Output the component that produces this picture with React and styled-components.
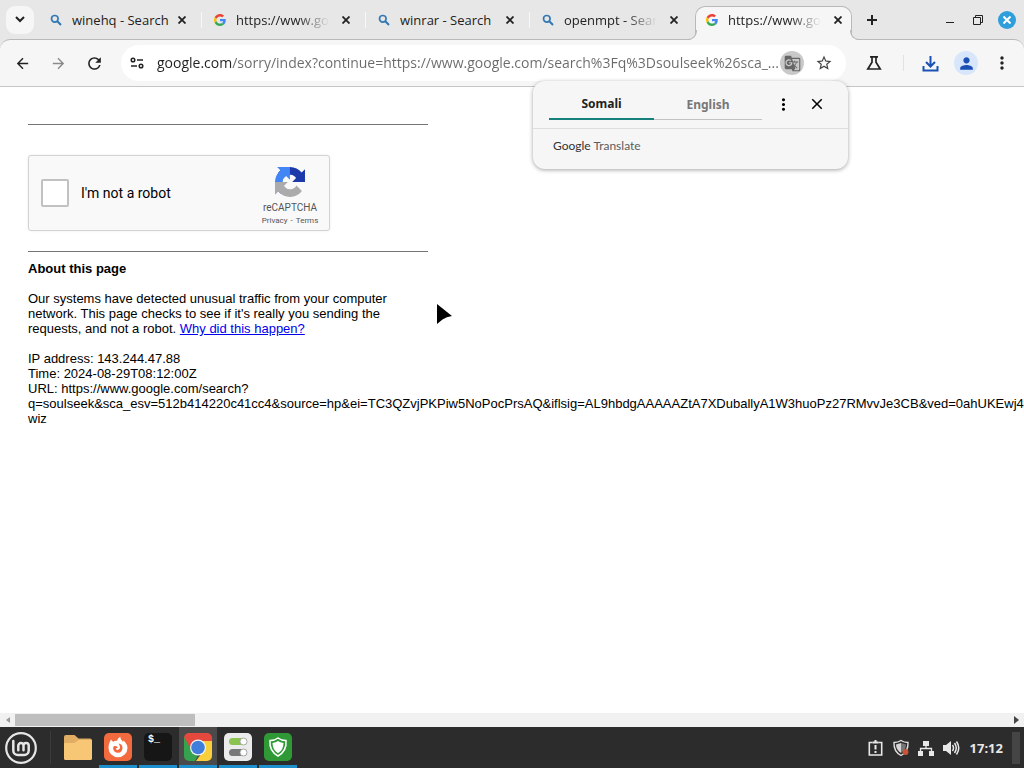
import React from "react";
import styled, { createGlobalStyle } from "styled-components";
import { MdArrowBack, MdArrowForward, MdClose, MdGTranslate, MdMoreVert, MdRefresh, MdStarBorder, MdPerson } from "react-icons/md";

const GlobalStyle = createGlobalStyle`
  * { box-sizing: border-box; }
  body { margin: 0; background: #fff; font-family: "Liberation Sans", sans-serif; overflow: hidden; }
  button { border: 0; padding: 0; margin: 0; background: none; color: inherit; font: inherit; display: inline-flex; align-items: center; justify-content: center; flex: none; }
  svg { display: block; flex: none; }
`;

const Screen = styled.div`
  display: flex;
  flex-direction: column;
  min-height: 100vh;
  width: 100%;
  overflow: hidden;
`;

/* ---- browser chrome ---- */
const TabStrip = styled.header`
  display: flex;
  align-items: center;
  height: 39px;
  padding: 0 8px 0 6px;
  background: #e7e7e7;
  color: #222;
  font: 13px/18px "Open Sans", sans-serif;
`;

const TabSearch = styled.button`
  width: 28px;
  height: 28px;
  border-radius: 9px;
  background: #f6f6f6 !important;
  margin-right: 4px;
`;

const Tabs = styled.nav`
  display: flex;
  align-self: stretch;
`;

const Tab = styled.div`
  position: relative;
  display: flex;
  align-items: center;
  width: 164px;
  padding: 0 13px 0 12px;
  gap: 10px;
  z-index: ${(p) => (p.$active ? 2 : 1)};
  &::after {
    content: "";
    position: absolute;
    right: 0;
    top: 12px;
    height: 16px;
    width: 1px;
    background: ${(p) => (p.$line ? "#f8f8f8" : "transparent")};
  }
`;

const ActiveShape = styled.span`
  position: absolute;
  inset: 6px 6px -1px 1px;
  background: #f6f6f6;
  border: 1px solid #b9b9b9;
  border-bottom: 0;
  border-radius: 10px 10px 0 0;
  z-index: -1;
  &::before, &::after {
    content: "";
    position: absolute;
    bottom: 0;
    width: 9px;
    height: 9px;
    border-bottom: 1px solid #b9b9b9;
  }
  &::before {
    left: -9px;
    border-right: 1px solid #b9b9b9;
    border-bottom-right-radius: 9px;
    box-shadow: 3px 3px 0 #f6f6f6;
  }
  &::after {
    right: -9px;
    border-left: 1px solid #b9b9b9;
    border-bottom-left-radius: 9px;
    box-shadow: -3px 3px 0 #f6f6f6;
  }
`;

const TabTitle = styled.a`
  flex: 1;
  min-width: 0;
  margin-right: -6px;
  overflow: hidden;
  white-space: nowrap;
  color: #222;
  text-decoration: none;
  mask-image: ${(p) => (p.$fade ? "linear-gradient(90deg, #000 62%, transparent 94%)" : "none")};
`;

const TabClose = styled.button`
  width: 14px;
  height: 14px;
`;

const WindowButtons = styled.div`
  display: flex;
  align-items: center;
  gap: 12px;
  margin-left: auto;
`;

const WindowButton = styled.button`
  width: 16px;
  height: 18px;
`;

const NewTab = styled.button`
  width: 28px;
  height: 28px;
`;

const CloseWindow = styled.button`
  width: 18px;
  height: 18px;
  border-radius: 50%;
  background: #2f9fdc !important;
  color: #fff;
`;

const ToolbarBack = styled.div`
  background: #e7e7e7;
`;

const Toolbar = styled.div`
  display: flex;
  align-items: center;
  height: 48px;
  padding: 0 10px;
  background: #f6f6f6;
  border-top: 1px solid #b9b9b9;
  border-bottom: 1px solid #c6c6c6;
  border-radius: 10px 10px 0 0;
  color: #222;
`;

const ToolButton = styled.button`
  width: 24px;
  height: 24px;
  border-radius: 50%;
  margin-right: ${(p) => p.$gap || 0}px;
  color: ${(p) => p.$color || "#222"};
  && { background: ${(p) => p.$bg || "none"}; }
`;

const Omnibox = styled.form`
  display: flex;
  align-items: center;
  flex: 1;
  min-width: 0;
  height: 36px;
  border-radius: 18px;
  background: #fff;
  padding: 0 10px 0 4px;
  margin: 0 16px 0 15px;
`;

const Address = styled.input`
  flex: 1;
  min-width: 0;
  border: 0;
  outline: 0;
  padding: 0;
  margin: 0 0 0 8px;
  font: 14px/20px "Open Sans", sans-serif;
  color: transparent;
  background: linear-gradient(90deg, #222 75px, #6a6a6a 75px);
  background-clip: text;
  -webkit-background-clip: text;
`;

const ToolDivider = styled.span`
  width: 1px;
  height: 16px;
  background: #e2e2e2;
  margin: 0 14px 0 17px;
`;

/* ---- page ---- */
const Viewport = styled.main`
  position: relative;
  flex: 1;
  padding: 37px 28px 0;
  overflow: hidden;
  background: #fff;
`;

const Column = styled.div`
  width: 400px;
  max-width: 100%;
  color: #000;
  font-size: 13px;
  line-height: 15px;
`;

const Rule = styled.hr`
  height: 1px;
  border: 0;
  margin: 0;
  background: #757575;
`;

const Captcha = styled.section`
  display: flex;
  align-items: center;
  width: 302px;
  height: 76px;
  margin: 30px 0 20px;
  padding: 0 7px 0 12px;
  background: #f9f9f9;
  border: 1px solid #d3d3d3;
  border-radius: 3px;
  box-shadow: 0 0 3px rgba(0, 0, 0, 0.08);
  font-family: Roboto, sans-serif;
`;

const CheckLabel = styled.label`
  display: flex;
  align-items: center;
  gap: 12px;
  flex: 1;
  font-size: 14px;
  line-height: 18px;
`;

const Check = styled.input`
  appearance: none;
  width: 28px;
  height: 28px;
  margin: 0;
  background: #fff;
  border: 2px solid #c1c1c1;
  border-radius: 2px;
`;

const Brand = styled.div`
  display: flex;
  flex-direction: column;
  align-items: center;
  gap: 2px;
  width: 64px;
  margin-top: 6px;
  color: #555;
  font-size: 10px;
  line-height: 12px;
`;

const BrandName = styled.span`
  margin-top: 3px;
`;

const BrandLinks = styled.div`
  display: flex;
  gap: 3px;
  font-size: 8px;
  line-height: 10px;
  white-space: nowrap;
  a { color: #555; text-decoration: none; }
`;

const Heading = styled.h1`
  margin: 9px 0 15px;
  font-size: 13px;
  line-height: 15px;
`;

const Paragraph = styled.p`
  margin: 0 0 15px;
  white-space: ${(p) => (p.$nowrap ? "nowrap" : "normal")};
  a { color: #0000ee; }
`;

const Translate = styled.aside`
  position: absolute;
  top: 81px;
  right: 176px;
  width: 315px;
  height: 88px;
  background: #f6f6f6;
  border-radius: 12px;
  box-shadow: 0 1px 4px rgba(0, 0, 0, 0.36);
  z-index: 5;
  font-family: "Noto Sans", sans-serif;
`;

const TranslateTop = styled.div`
  display: flex;
  height: 48px;
  padding: 8px 20px 8px 16px;
  border-bottom: 1px solid #dedede;
`;

const LanguageTab = styled.button`
  width: ${(p) => (p.$on ? 105 : 108)}px;
  height: 31px;
  font-size: 12px;
  font-weight: 700;
  color: ${(p) => (p.$on ? "#222" : "#777")};
  && { border-bottom: ${(p) => (p.$on ? "2px solid #16817a" : "1px solid #c3c3c3")}; }
`;

const PopupButton = styled.button`
  width: 33px;
  height: 30px;
  margin-left: ${(p) => p.$gap || 0}px;
`;

const TranslateBrand = styled.div`
  padding: 8px 20px;
  font: 12px/18px Lato, sans-serif;
  color: #5c5c5c;
  b { font-weight: 400; color: #333; }
`;

const Pointer = styled.svg`
  position: absolute;
  left: 435px;
  top: 302px;
  z-index: 6;
`;

const ScrollBar = styled.div`
  display: flex;
  align-items: center;
  height: 14px;
  background: #f1f1f1;
`;

const ScrollArrow = styled.button`
  width: 15px;
  height: 14px;
  margin-left: ${(p) => (p.$end ? "auto" : 0)};
  color: ${(p) => (p.$end ? "#444" : "#999")};
`;

const Thumb = styled.div`
  width: 18%;
  max-width: 180px;
  height: 12px;
  background: #bebebe;
`;

/* ---- desktop panel ---- */
const Panel = styled.footer`
  display: flex;
  align-items: center;
  height: 41px;
  padding: 0 4px;
  background: #2c2c2c;
  color: #e8e8e8;
`;

const MenuButton = styled.button`
  width: 34px;
  height: 40px;
`;

const PanelDivider = styled.span`
  width: 1px;
  height: 33px;
  background: #3b3b3b;
  margin: 0 8px 0 12px;
`;

const Launchers = styled.nav`
  display: flex;
  gap: 2px;
  align-self: stretch;
`;

const Launcher = styled.button`
  width: 38px;
  height: 41px;
  && { background: ${(p) => (p.$active ? "#4a4a4a" : "none")}; }
  && { border-bottom: 3px solid ${(p) => (p.$running ? "#1e8fcd" : "transparent")}; }
`;

const Tile = styled.span`
  display: flex;
  align-items: center;
  justify-content: center;
  width: 28px;
  height: 28px;
  border-radius: 5px;
  margin-top: 1px;
  background: ${(p) => p.$bg};
  color: #fff;
`;

const Prompt = styled.span`
  align-self: flex-start;
  width: 100%;
  padding: 1px 4px;
  text-align: left;
  font: 700 10px/12px "Liberation Mono", monospace;
`;

const Tray = styled.div`
  display: flex;
  align-items: center;
  gap: 8px;
  margin-left: auto;
`;

const Clock = styled.time`
  margin: 0 1px 0 2px;
  font: 700 13px/18px "Noto Sans", sans-serif;
`;

const ShowDesktop = styled.button`
  width: 8px;
  height: 32px;
  && { background: #454545; }
`;

const SearchIcon = () => (
  <svg width="12" height="12" viewBox="0 0 12 12" fill="none" stroke="#3178b4">
    <circle cx="4.8" cy="4.8" r="3.3" strokeWidth="1.7" />
    <path d="M7.3 7.3 11 11" strokeWidth="2" />
  </svg>
);

const GoogleIcon = () => (
  <svg width="12" height="12" viewBox="0 0 48 48">
    <path fill="#EA4335" d="M24 9.5c3.54 0 6.71 1.22 9.21 3.6l6.85-6.85C35.9 2.38 30.47 0 24 0 14.62 0 6.51 5.38 2.56 13.22l7.98 6.19C12.43 13.72 17.74 9.5 24 9.5z" />
    <path fill="#4285F4" d="M46.98 24.55c0-1.57-.15-3.09-.38-4.55H24v9.02h12.94c-.58 2.96-2.26 5.48-4.78 7.18l7.73 6c4.51-4.18 7.09-10.36 7.09-17.65z" />
    <path fill="#FBBC05" d="M10.53 28.59A14.5 14.5 0 0 1 9.77 24c0-1.6.27-3.14.76-4.59l-7.98-6.19A23.9 23.9 0 0 0 0 24c0 3.88.92 7.54 2.56 10.78l7.97-6.19z" />
    <path fill="#34A853" d="M24 48c6.48 0 11.93-2.13 15.89-5.81l-7.73-6c-2.15 1.45-4.92 2.3-8.16 2.3-6.26 0-11.57-4.22-13.47-9.91l-7.98 6.19C6.51 42.62 14.62 48 24 48z" />
  </svg>
);

const Cross = ({ size = 8, width = 1.8 }) => (
  <svg width={size} height={size} viewBox="0 0 8 8" stroke="currentColor" strokeWidth={width}>
    <path d="M.5.5l7 7M7.5.5l-7 7" />
  </svg>
);

const tabs = [
  { title: "winehq - Search", icon: <SearchIcon />, line: true },
  { title: "https://www.google.com", icon: <GoogleIcon />, fade: true, line: true },
  { title: "winrar - Search", icon: <SearchIcon />, line: true },
  { title: "openmpt - Search", icon: <SearchIcon />, fade: true },
  { title: "https://www.google.com", icon: <GoogleIcon />, fade: true, active: true },
];

const Recaptcha = () => (
  <svg width="30" height="30" viewBox="0 0 64 64">
    <path fill="#1c3aa9" d="M64 31.955l-.033-1.37V4.687l-7.16 7.16C50.948 4.674 42.033.093 32.05.093c-10.4 0-19.622 4.96-25.458 12.64l11.736 11.86a15.55 15.55 0 0 1 4.754-5.334c2.05-1.6 4.952-2.906 8.968-2.906.485 0 .86.057 1.135.163 4.976.393 9.288 3.14 11.828 7.124l-8.307 8.307L64 31.953" />
    <path fill="#4285f4" d="M31.862.094l-1.37.033H4.594l7.16 7.16C4.58 13.147 0 22.06 0 32.046c0 10.4 4.96 19.622 12.64 25.458L24.5 45.768a15.55 15.55 0 0 1-5.334-4.754c-1.6-2.05-2.906-4.952-2.906-8.968 0-.485.057-.86.163-1.135.393-4.976 3.14-9.288 7.124-11.828l8.307 8.307L31.86.095" />
    <path fill="#ababab" d="M.001 32.045l.033 1.37v25.898l7.16-7.16c5.86 7.173 14.774 11.754 24.76 11.754 10.4 0 19.622-4.96 25.458-12.64l-11.736-11.86a15.55 15.55 0 0 1-4.754 5.334c-2.05 1.6-4.952 2.906-8.968 2.906-.485 0-.86-.057-1.135-.163-4.976-.393-9.288-3.14-11.828-7.124l8.307-8.307c-10.522.04-22.4.066-27.295-.005" />
  </svg>
);

const MintIcon = () => (
  <svg width="34" height="34" viewBox="0 0 34 34" fill="none" stroke="#e6e6e6">
    <circle cx="17" cy="17" r="14.8" strokeWidth="2.2" />
    <path strokeWidth="2.5" strokeLinecap="round" d="M9.3 10v9.5a4.5 4.5 0 0 0 4.5 4.5h6.4a4.5 4.500 0 0 0 4.500-4.500V14.600a2.600 2.600 0 0 0-5.200 0V19.300M19.500 14.600a2.600 2.600 0 0 0-5.200 0V19.300" />
  </svg>
);

const FolderIcon = () => (
  <svg width="28" height="28" viewBox="0 0 28 28">
    <path fill="#e0ad63" d="M0 4Q0 2 2 2h8.500l4 3.500H26q2 0 2 2V12H0z" />
    <path fill="#f8c775" d="M0 11q0-1 1-1h9.500l4-3H27q1 0 1 1v17.500q0 1.500-1.500 1.500h-25Q0 27 0 25.500z" />
  </svg>
);

const FirefoxIcon = () => (
  <svg width="22" height="22" viewBox="0 0 22 22">
    <path fill="#fff" d="M2.500 6.500L4 3.500l2 2.300Q8 4.500 10 4.800q1-2.800 3.300-4Q13.200 3 15 4.500l1 1.500.5-1.500Q20.500 8 20.500 12a9.500 9.200 0 0 1-19 0q0-3 1-5.500z" />
    <path fill="#f26a3d" d="M11.500 7.500q3.800.6 4 4.200a4.700 4.700 0 0 1-9.400.8q0-1.500.8-2.500l2.800.2 1.200 1-2.200 1.500q1 1.600 2.600 1.100 2-.6 1.700-2.800-.2-2-1.500-3.500z" />
  </svg>
);

const ChromeIcon = () => (
  <svg width="28" height="28" viewBox="0 0 28 28">
    <defs><clipPath id="tile"><rect width="28" height="28" rx="5" /></clipPath></defs>
    <g clipPath="url(#tile)">
      <path fill="#e5483c" d="M0 0h28v8H14L7 17 0 5z" />
      <path fill="#f9cf3c" d="M28 8v20H12l8-11-3-9z" />
      <path fill="#35a24e" d="M0 4l8 14 6 4-3 6H0z" />
    </g>
    <circle cx="14" cy="14.500" r="8" fill="#f3f3f3" />
    <circle cx="14" cy="14.500" r="6.800" fill="#3f7edb" />
  </svg>
);

const SettingsIcon = () => (
  <svg width="28" height="28" viewBox="0 0 28 28">
    <rect x="5" y="5" width="18" height="7" rx="3.500" fill="#8bc34f" />
    <circle cx="19.500" cy="8.500" r="3.500" fill="#fff" stroke="#999" strokeWidth=".8" />
    <rect x="5" y="16" width="18" height="7" rx="3.500" fill="#777" />
    <circle cx="19.500" cy="19.500" r="3.500" fill="#fff" stroke="#999" strokeWidth=".8" />
  </svg>
);

const ShieldIcon = () => (
  <svg width="22" height="22" viewBox="0 0 22 22">
    <path fill="none" stroke="#fff" strokeWidth="1.500" d="M11 2q3 2.500 8 2.500 1 10.500-8 15.500-9-5-8-15.500 5 0 8-2.500z" />
    <path fill="#fff" d="M11 5q2 1.600 5.500 1.900Q16.500 14 11 17.200 5.500 14 5.500 6.900 9 6.600 11 5z" />
  </svg>
);

export default function App() {
  return (
    <Screen>
      <GlobalStyle />
      <TabStrip>
        <TabSearch aria-label="Search tabs">
          <svg width="10" height="7" viewBox="0 0 10 7" fill="none" stroke="currentColor" strokeWidth="2"><path d="M1 1l4 4 4-4" /></svg>
        </TabSearch>
        <Tabs>
          {tabs.map((t, i) => (
            <Tab key={i} $active={t.active} $line={t.line}>
              {t.active && <ActiveShape />}
              {t.icon}
              <TabTitle href="#" $fade={t.fade}>{t.title}</TabTitle>
              <TabClose aria-label="Close tab"><Cross /></TabClose>
            </Tab>
          ))}
        </Tabs>
        <NewTab aria-label="New tab">
          <svg width="10" height="10" viewBox="0 0 10 10" stroke="currentColor" strokeWidth="2"><path d="M5 0v10M0 5h10" /></svg>
        </NewTab>
        <WindowButtons>
          <WindowButton aria-label="Minimize">
            <svg width="8" height="8" viewBox="0 0 8 8"><path stroke="currentColor" d="M0 6.500h8" /></svg>
          </WindowButton>
          <WindowButton aria-label="Restore">
            <svg width="10" height="10" viewBox="0 0 10 10" fill="none" stroke="currentColor"><path d="M.5 2.500h7v7h-7zM2.500 2.500v-2h7v7h-2" /></svg>
          </WindowButton>
          <CloseWindow aria-label="Close window"><Cross width={2} /></CloseWindow>
        </WindowButtons>
      </TabStrip>

      <ToolbarBack>
        <Toolbar>
          <ToolButton aria-label="Back" $gap={12}><MdArrowBack size={17} /></ToolButton>
          <ToolButton aria-label="Forward" $gap={12} $color="#8a8a8a"><MdArrowForward size={17} /></ToolButton>
          <ToolButton aria-label="Reload"><MdRefresh size={19} /></ToolButton>
          <Omnibox onSubmit={(e) => e.preventDefault()}>
            <ToolButton type="button" aria-label="Site information">
              <svg width="14" height="12" viewBox="0 0 14 12" fill="none" stroke="currentColor" strokeWidth="1.500">
                <circle cx="3" cy="3" r="1.800" /><path d="M7 3h6" />
                <circle cx="11" cy="9" r="1.800" /><path d="M1 9h6" />
              </svg>
            </ToolButton>
            <Address aria-label="Address" type="text" readOnly value="google.com/sorry/index?continue=https://www.google.com/search%3Fq%3Dsoulseek%26sca_..." />
            <ToolButton type="button" aria-label="Translate page" $bg="#c9c9c9" $gap={8} $color="#666"><MdGTranslate size={17} /></ToolButton>
            <ToolButton type="button" aria-label="Bookmark" $color="#444"><MdStarBorder size={18} /></ToolButton>
          </Omnibox>
          <ToolButton aria-label="Experiments">
            <svg width="16" height="16" viewBox="0 0 16 16" fill="none" stroke="currentColor" strokeWidth="1.700"><path d="M4 1.800h8M6 2v5.200L1.800 14h12.400L10 7.200V2" /></svg>
          </ToolButton>
          <ToolDivider />
          <ToolButton aria-label="Downloads" $gap={12} $color="#1b50b4">
            <svg width="17" height="17" viewBox="0 0 17 17" fill="none" stroke="currentColor" strokeWidth="2"><path d="M8.500 1v10M4 7l4.500 4.500L13 7M1.500 11v4.500h14V11" /></svg>
          </ToolButton>
          <ToolButton aria-label="Profile" $bg="#d8e6fb" $gap={12} $color="#1b50b4"><MdPerson size={19} /></ToolButton>
          <ToolButton aria-label="Menu"><MdMoreVert size={20} /></ToolButton>
        </Toolbar>
      </ToolbarBack>

      <Viewport>
        <Column>
          <Rule />
          <Captcha>
            <CheckLabel><Check type="checkbox" />I'm not a robot</CheckLabel>
            <Brand>
              <Recaptcha />
              <BrandName>reCAPTCHA</BrandName>
              <BrandLinks><a href="#">Privacy</a><span>-</span><a href="#">Terms</a></BrandLinks>
            </Brand>
          </Captcha>
          <Rule />
          <Heading>About this page</Heading>
          <Paragraph>
            Our systems have detected unusual traffic from your computer network. This page checks to see if it's really you sending the requests, and not a robot. <a href="#">Why did this happen?</a>
          </Paragraph>
          <Paragraph $nowrap>
            IP address: 143.244.47.88<br />
            Time: 2024-08-29T08:12:00Z<br />
            URL: https://www.google.com/search?<br />
            q=soulseek&amp;sca_esv=512b414220c41cc4&amp;source=hp&amp;ei=TC3QZvjPKPiw5NoPocPrsAQ&amp;iflsig=AL9hbdgAAAAAZtA7XDuballyA1W3huoPz27RMvvJe3CB&amp;ved=0ahUKEwj4<br />
            wiz
          </Paragraph>
        </Column>
      </Viewport>

      <Translate>
        <TranslateTop>
          <LanguageTab $on>Somali</LanguageTab>
          <LanguageTab>English</LanguageTab>
          <PopupButton aria-label="Translate options" $gap={5}><MdMoreVert size={19} /></PopupButton>
          <PopupButton aria-label="Close"><MdClose size={18} /></PopupButton>
        </TranslateTop>
        <TranslateBrand><b>Google</b> Translate</TranslateBrand>
      </Translate>
      <Pointer width="20" height="26" viewBox="0 0 20 26"><path d="M2 2v20l5.500-4.500q4-3 9.500-3.500z" fill="#000" /></Pointer>

      <ScrollBar>
        <ScrollArrow aria-label="Scroll left"><svg width="4" height="6" viewBox="0 0 4 6"><path fill="currentColor" d="M4 0v6L0 3z" /></svg></ScrollArrow>
        <Thumb />
        <ScrollArrow aria-label="Scroll right" $end><svg width="5" height="8" viewBox="0 0 5 8"><path fill="currentColor" d="M0 0l5 4-5 4z" /></svg></ScrollArrow>
      </ScrollBar>

      <Panel>
        <MenuButton aria-label="Menu"><MintIcon /></MenuButton>
        <PanelDivider />
        <Launchers>
          <Launcher aria-label="Files"><Tile><FolderIcon /></Tile></Launcher>
          <Launcher aria-label="Firefox" $running><Tile $bg="#f26a3d"><FirefoxIcon /></Tile></Launcher>
          <Launcher aria-label="Terminal" $running><Tile $bg="#161616"><Prompt>$_</Prompt></Tile></Launcher>
          <Launcher aria-label="Chrome" $running $active><Tile><ChromeIcon /></Tile></Launcher>
          <Launcher aria-label="Settings" $running><Tile $bg="#ebebeb"><SettingsIcon /></Tile></Launcher>
          <Launcher aria-label="Update manager" $running><Tile $bg="#2f9a35"><ShieldIcon /></Tile></Launcher>
        </Launchers>
        <Tray>
          <svg width="17" height="18" viewBox="0 0 17 18" fill="none" stroke="currentColor" strokeWidth="1.600">
            <path d="M5.500 3.500H2.300v12.500h12.400v-12.500h-3.200" /><path d="M8.500 6v4.500M8.500 12v2" strokeWidth="2" /><path d="M5.500 3.500h6M8.500 1v3" strokeWidth="2" />
          </svg>
          <svg width="18" height="18" viewBox="0 0 18 18">
            <path fill="none" stroke="#e0e0e0" strokeWidth="1.400" d="M9 1.500q3 2 7 2 .5 9-7 13-7.500-4-7-13 4 0 7-2z" />
            <path fill="#d5d5d5" d="M9 4v10Q4 11 4 5.500z" /><path fill="#777" d="M9 4v10q5-3 5-8.500z" />
            <circle cx="13.500" cy="13" r="3" fill="#c8543a" />
          </svg>
          <svg width="16" height="18" viewBox="0 0 16 18" fill="currentColor">
            <path d="M5 2h6v5H5zM0 12h5v5H0zM11 12h5v5h-5z" /><path d="M8 7v3M2.500 12v-2.500h11V12" fill="none" stroke="currentColor" strokeWidth="1.300" />
          </svg>
          <svg width="18" height="18" viewBox="0 0 18 18" fill="none" stroke="currentColor" strokeWidth="1.500">
            <path fill="currentColor" stroke="none" d="M1 6h3l5-4v14l-5-4H1z" /><path d="M10.500 6q2 3 0 6M12.500 4q3.500 5 0 10M14.500 2.500q4.500 6.500 0 13" />
          </svg>
          <Clock>17:12</Clock>
          <ShowDesktop aria-label="Show desktop" />
        </Tray>
      </Panel>
    </Screen>
  );
}
